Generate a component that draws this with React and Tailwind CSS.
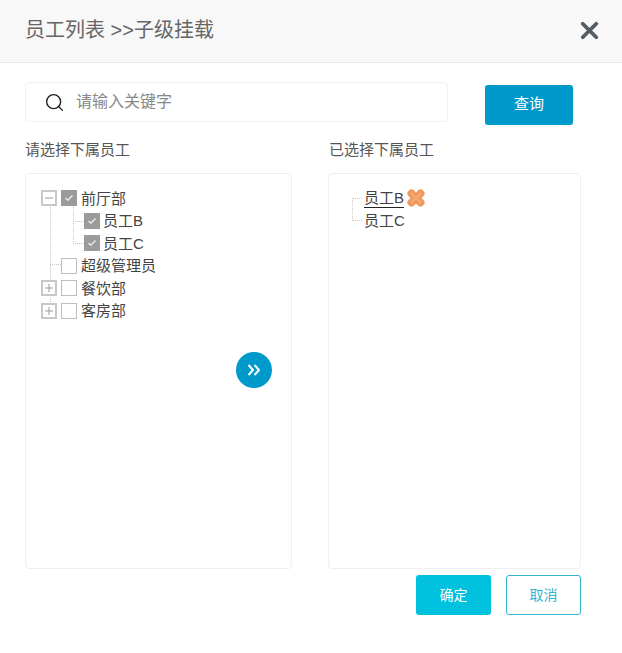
import React from "react";
import { Search, X } from "lucide-react";

const Box = ({ checked }) => (
  <span
    className={`flex h-4 w-4 shrink-0 items-center justify-center ${
      checked ? "bg-[#9b9b9b]" : "border border-[#bdbdbd] bg-white"
    }`}
  >
    {checked && (
      <svg width="10" height="8" viewBox="0 0 10 8" fill="none">
        <path d="M1.5 4l2.3 2.3L8.500 1.500" stroke="#e8e8e8" strokeWidth="1.500" />
      </svg>
    )}
  </span>
);

const Switch = ({ open }) => (
  <span className="relative z-10 mr-1 flex h-4 w-4 shrink-0 items-center justify-center border-2 border-[#c8c8c8] bg-white">
    <svg width="10" height="10" viewBox="0 0 10 10" fill="none">
      <path d="M1 5h8" stroke="#a8a8a8" strokeWidth="1.200" />
      {!open && <path d="M5 1v8" stroke="#a8a8a8" strokeWidth="1.200" />}
    </svg>
  </span>
);

const Row = ({ indent, open, hasSwitch, checked, label }) => (
  <div className="flex h-[22.5px] items-center">
    <span className={indent ? "w-[43px] shrink-0" : hasSwitch ? "shrink-0" : "w-5 shrink-0"} />
    {hasSwitch && <Switch open={open} />}
    <Box checked={checked} />
    <span className={indent ? "ml-[3px] leading-none" : "ml-1 leading-none"}>{label}</span>
  </div>
);

const App = () => {
  return (
    <div className="h-[653px] w-[622px] bg-white text-[15px] text-[#444] font-['Liberation_Sans','Noto_Sans_CJK_SC',sans-serif]">
      {/* Header */}
      <div className="flex h-[63px] items-center justify-between border-b border-[#e9e9e9] bg-[#f8f8f8] pb-[2px] pl-[25px] pr-[19px]">
        <h1 className="text-[20px] font-normal text-[#666]">员工列表 &gt;&gt;子级挂载</h1>
        <X size={27} strokeWidth={3.4} className="text-[#555c63]" />
      </div>

      <div className="px-[25px]">
        {/* Search */}
        <div className="mt-[19px] flex items-start">
          <div className="flex h-[40px] w-[423px] items-center rounded border border-[#f1f1f1] pl-[18px]">
            <Search size={21} strokeWidth={1.600} className="text-[#222]" />
            <span className="ml-[11px] text-[16px] text-[#888]">请输入关键字</span>
          </div>
          <button className="ml-[37px] mt-[3px] h-[40px] w-[88px] rounded-[3px] bg-[#0099cc] pb-[2px] text-[15px] text-white">
            查询
          </button>
        </div>

        {/* Panel titles */}
        <div className="mt-[14px] flex text-[15px] leading-[22px] text-[#555]">
          <span className="w-[304px]">请选择下属员工</span>
          <span>已选择下属员工</span>
        </div>

        {/* Panels */}
        <div className="mt-[12px] flex">
          <div className="relative h-[396px] w-[267px] rounded border border-[#efefef] pl-[15px] pt-[13px]">
            <svg className="absolute left-0 top-0" width="100" height="150" fill="none" stroke="#c8c8c8" strokeDasharray="1 1">
              <path d="M24.500 31V129M24 90.500H35M47.500 31V69M47 47.500H58M47 69.500H58" />
            </svg>
            <div className="relative">
              <Row hasSwitch open checked label="前厅部" />
              <Row indent checked label="员工B" />
              <Row indent checked label="员工C" />
              <Row label="超级管理员" />
              <Row hasSwitch label="餐饮部" />
              <Row hasSwitch label="客房部" />
            </div>
            <button className="absolute left-[210px] top-[178px] flex h-9 w-9 items-center justify-center rounded-full bg-[#0099cc]">
              <svg width="14" height="12" viewBox="0 0 14 12" fill="none" stroke="#fff" strokeWidth="2">
                <path d="M1.500 1L6 6l-4.500 5M7.500 1L12 6l-4.500 5" />
              </svg>
            </button>
          </div>

          <div className="relative ml-[36px] h-[396px] w-[253px] rounded border border-[#efefef] pl-[35px] pt-[13px]">
            <svg className="absolute left-0 top-0" width="40" height="60" fill="none" stroke="#c8c8c8" strokeDasharray="1 1">
              <path d="M23.500 24V47M24 24.500H34M24 46.500H34" />
            </svg>
            <div className="flex h-[22.5px] items-center">
              <span className="border-b border-[#222] leading-[18px]">员工B</span>
              <svg className="ml-[1px]" width="22" height="22" viewBox="0 0 22 22" fill="none">
                <path d="M6.500 6.500l9 9M15.500 6.500l-9 9" stroke="#f0985c" strokeWidth="8" strokeLinecap="round" />
                <path d="M6.500 6.500l9 9M15.500 6.500l-9 9" stroke="#f4ab78" strokeWidth="2" strokeLinecap="round" />
              </svg>
            </div>
            <div className="flex h-[22.5px] items-center">
              <span className="leading-[18px]">员工C</span>
            </div>
          </div>
        </div>

        {/* Footer */}
        <div className="mt-[6px] flex justify-end gap-[15px] pr-[16px]">
          <button className="h-[40px] w-[75px] rounded-[3px] bg-[#00c1de] text-[14px] text-white">确定</button>
          <button className="h-[40px] w-[75px] rounded-[3px] border border-[#2eb5cf] bg-white text-[14px] text-[#2eb5cf]">
            取消
          </button>
        </div>
      </div>
    </div>
  );
};

export default App;
